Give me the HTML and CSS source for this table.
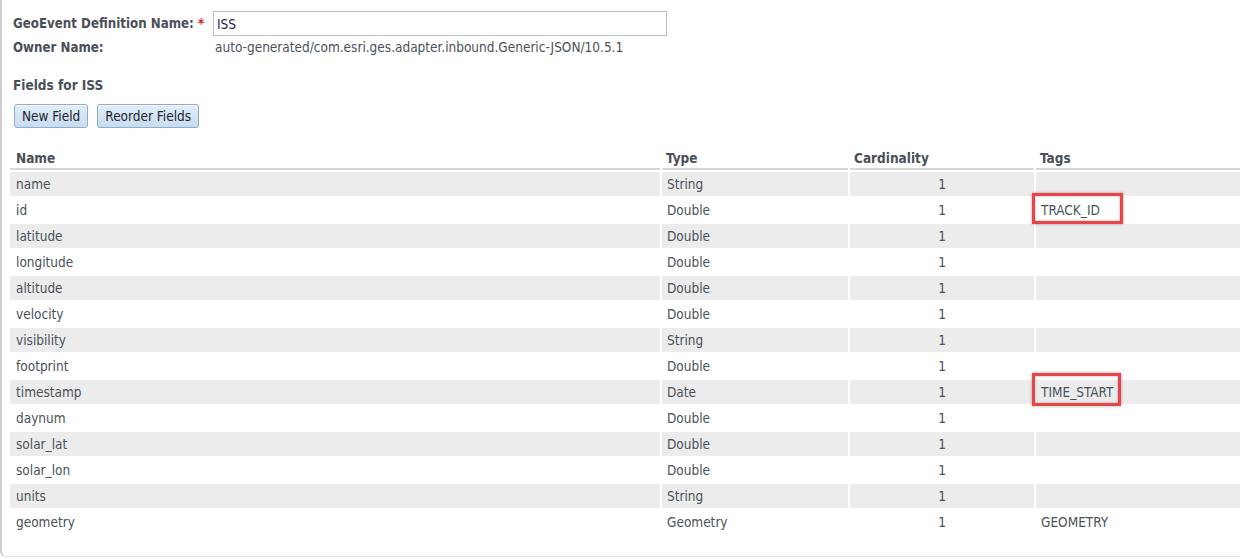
FILE: index.html
```html
<!DOCTYPE html>
<html>
<head>
<meta charset="utf-8">
<link rel="stylesheet" href="styles.css">
</head>
<body>
<div class="panel">
  <div class="form">
    <div class="form-row">
      <div class="label">GeoEvent Definition Name: <span class="req">*</span></div>
      <input class="text-input" type="text" value="ISS">
    </div>
    <div class="form-row owner">
      <div class="label">Owner Name:</div>
      <div class="value">auto-generated/com.esri.ges.adapter.inbound.Generic-JSON/10.5.1</div>
    </div>
  </div>
  <div class="section-title">Fields for ISS</div>
  <div class="buttons">
    <button class="btn">New Field</button>
    <button class="btn">Reorder Fields</button>
  </div>
  <table class="fields">
    <colgroup>
      <col class="c-name"><col class="c-type"><col class="c-card"><col class="c-tags">
    </colgroup>
    <thead>
      <tr><th>Name</th><th>Type</th><th>Cardinality</th><th>Tags</th></tr>
    </thead>
    <tbody>
      <tr><td>name</td><td>String</td><td class="num">1</td><td></td></tr>
      <tr><td>id</td><td>Double</td><td class="num">1</td><td><span class="mark mark-track">TRACK_ID</span></td></tr>
      <tr><td>latitude</td><td>Double</td><td class="num">1</td><td></td></tr>
      <tr><td>longitude</td><td>Double</td><td class="num">1</td><td></td></tr>
      <tr><td>altitude</td><td>Double</td><td class="num">1</td><td></td></tr>
      <tr><td>velocity</td><td>Double</td><td class="num">1</td><td></td></tr>
      <tr><td>visibility</td><td>String</td><td class="num">1</td><td></td></tr>
      <tr><td>footprint</td><td>Double</td><td class="num">1</td><td></td></tr>
      <tr><td>timestamp</td><td>Date</td><td class="num">1</td><td><span class="mark mark-time">TIME_START</span></td></tr>
      <tr><td>daynum</td><td>Double</td><td class="num">1</td><td></td></tr>
      <tr><td>solar_lat</td><td>Double</td><td class="num">1</td><td></td></tr>
      <tr><td>solar_lon</td><td>Double</td><td class="num">1</td><td></td></tr>
      <tr><td>units</td><td>String</td><td class="num">1</td><td></td></tr>
      <tr><td>geometry</td><td>Geometry</td><td class="num">1</td><td>GEOMETRY</td></tr>
    </tbody>
  </table>
</div>
</body>
</html>
```

FILE: styles.css
```css
html, body {
  margin: 0;
  padding: 0;
  background: #fff;
  overflow: hidden;
}
body {
  font-family: "DejaVu Sans Condensed", "DejaVu Sans", sans-serif;
  font-size: 13.5px;
  color: #4a525a;
}
.panel {
  width: 1300px;
  height: 557px;
  box-sizing: border-box;
  border-left: 2px solid #cdcdcd;
  border-bottom: 1px solid #e6e6e6;
  border-bottom-left-radius: 6px;
  padding: 11px 0 0 0;
}
.form {
  padding-left: 11px;
}
.form-row {
  display: flex;
  align-items: center;
}
.label {
  width: 200px;
  font-weight: bold;
  font-size: 13.2px;
  color: #4a5058;
}
.req {
  color: #e02020;
}
.text-input {
  width: 454px;
  height: 25px;
  box-sizing: border-box;
  margin: 0;
  border: 1px solid #b6bec6;
  padding: 0 3px;
  font-family: inherit;
  font-size: 13.5px;
  color: #1a1a50;
  outline: none;
}
.owner {
  margin-top: 3px;
}
.value {
  color: #4a525a;
  margin-left: 2px;
}
.section-title {
  padding-left: 11px;
  margin-top: 22px;
  font-weight: bold;
  color: #4a5058;
}
.buttons {
  display: flex;
  gap: 9px;
  padding-left: 12px;
  margin-top: 11px;
}
.btn {
  height: 24px;
  padding: 0 7px;
  font-family: inherit;
  font-size: 13.5px;
  color: #1c2530;
  background: linear-gradient(#e2edf8, #c9dcf0);
  border: 1px solid #8eaccb;
  border-radius: 3px;
  box-shadow: inset 0 1px 0 #f2f7fc;
}
.fields {
  margin-top: 14px;
  margin-left: 6px;
  border-collapse: separate;
  border-spacing: 2px;
  table-layout: fixed;
  width: 1260px;
}
.c-name { width: 650px; }
.c-type { width: 186px; }
.c-card { width: 184px; }
.fields th {
  text-align: left;
  font-weight: bold;
  color: #4a5058;
  padding: 5px 6px 2px;
  height: 17px;
  border-bottom: 2px solid #d6d6d6;
}
.fields th:nth-child(2),
.fields th:nth-child(3),
.fields th:nth-child(4) {
  padding-left: 4px;
}
.fields td {
  height: 24px;
  padding: 0 6px;
  box-sizing: border-box;
}
.fields tbody tr:nth-child(odd) td {
  background: #ececec;
}
.fields td:nth-child(2) {
  padding-left: 5px;
}
.fields td:nth-child(4) {
  padding-left: 5px;
}
.fields td.num {
  text-align: center;
  padding: 0;
}
.mark {
  position: relative;
}
.mark::after {
  content: "";
  position: absolute;
  box-sizing: border-box;
  left: -9px;
  top: -9px;
  bottom: -6px;
  width: 91px;
  border: 3px solid #ea4448;
  box-shadow: 0 0 3px rgba(0, 0, 0, 0.35), inset 0 0 3px rgba(0, 0, 0, 0.3);
}
.mark-time::after {
  width: 89px;
  top: -11px;
  bottom: -6px;
}
```
